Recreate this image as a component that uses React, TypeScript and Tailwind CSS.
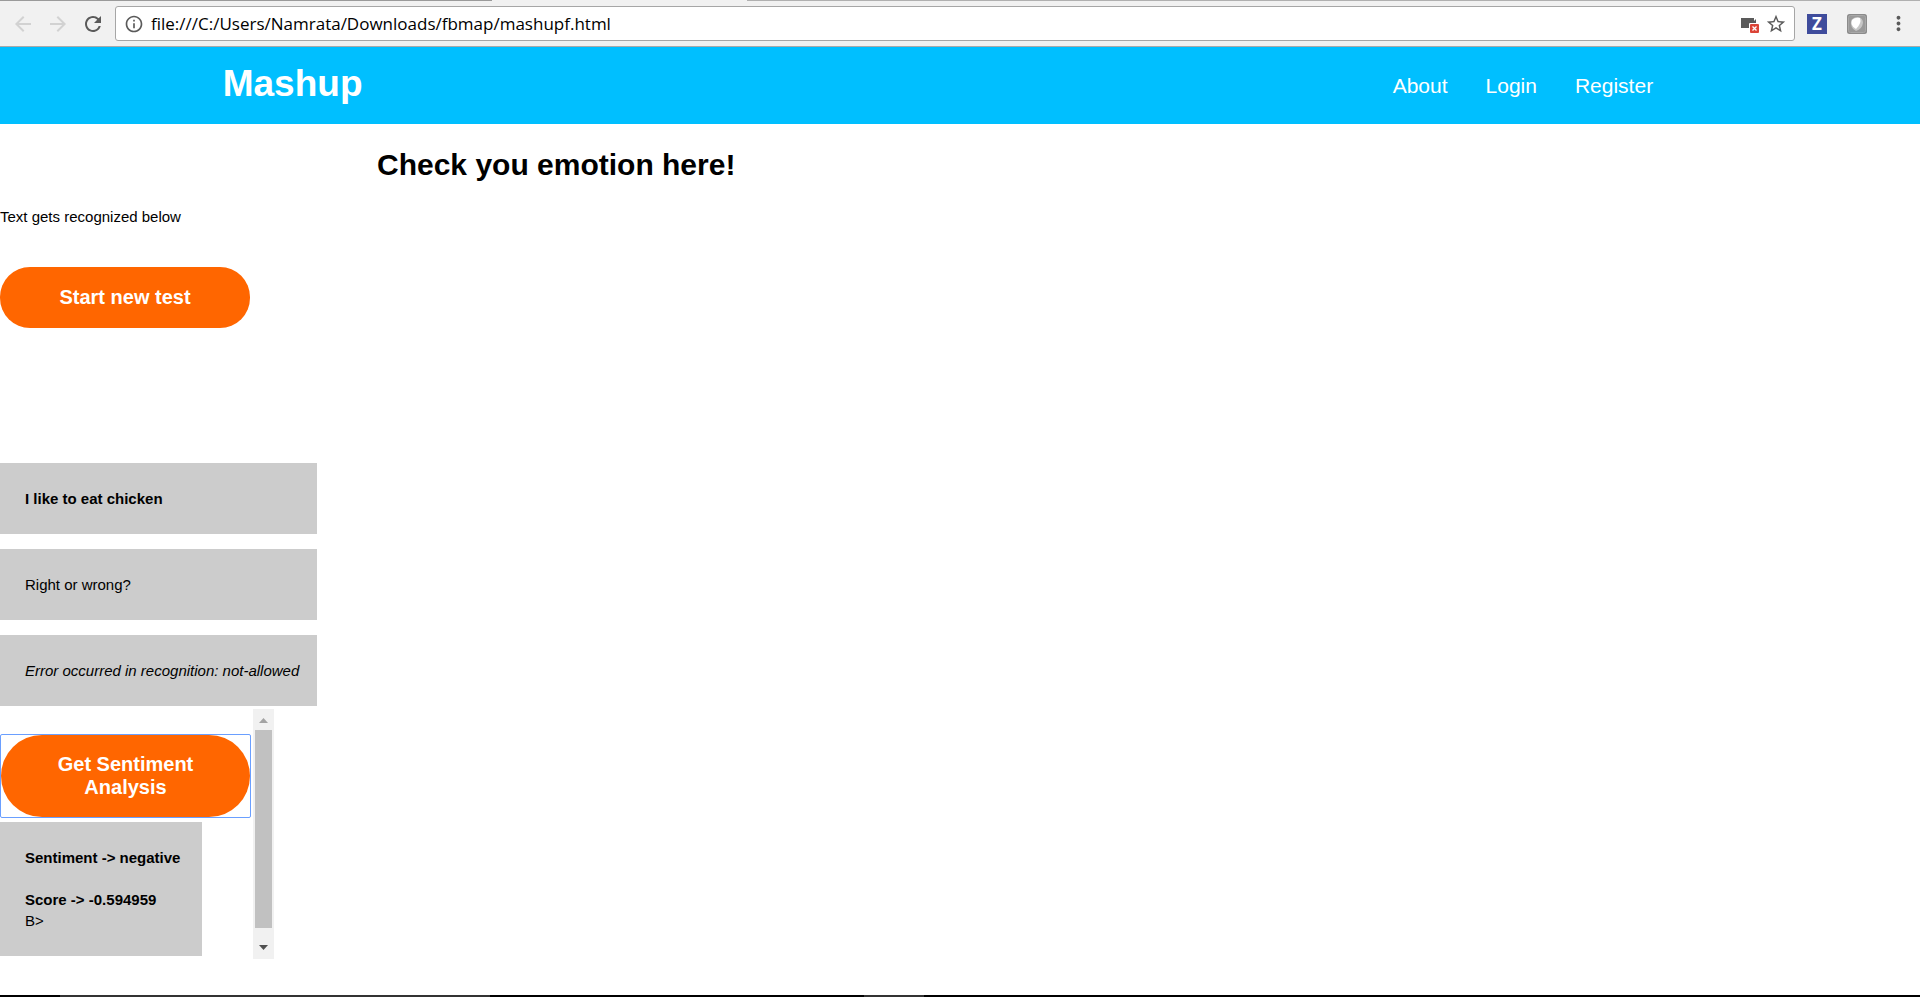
import React from "react";
import { MdArrowBack, MdArrowForward, MdRefresh, MdInfoOutline, MdStarBorder, MdMoreVert } from "react-icons/md";

function BlockedCamera() {
  return (
    <svg width="19" height="18" viewBox="0 0 19 18" aria-hidden="true">
      <path d="M0 3h13v3l2-2v9H0z" fill="#5a5a5a" />
      <rect x="8" y="8" width="11" height="10" rx="1" fill="#fff" />
      <rect x="9" y="9" width="9" height="9" rx="1" fill="#db4437" />
      <path d="M11.500 11.500l4 4m0-4l-4 4" stroke="#fff" strokeWidth="1.300" />
    </svg>
  );
}

function ShieldIcon() {
  return (
    <svg width="20" height="20" viewBox="0 0 20 20" aria-hidden="true">
      <rect width="20" height="20" rx="2.500" fill="#8b8b8b" />
      <rect x="1.500" y="1.500" width="17" height="17" rx="2" fill="#999" stroke="#a8a8a8" />
      <path d="M4 7Q6 3 11 3Q16 4 16 9Q15 15 9 17Q3 14 4 7z" fill="#c6c6c6" />
      <path d="M5 6Q8 3 13 4Q15 9 9 15Q3 12 5 6z" fill="#fff" />
    </svg>
  );
}

function BrowserBar() {
  return (
    <div className="flex h-[47px] flex-col border-b border-[#a9a9a9] bg-[#f1f1f1]">
      <div className="flex h-px">
        <div className="w-[25.6%] bg-[#9a9a9a]" />
        <div className="w-[13.3%]" />
        <div className="flex-1 bg-[#b0b0b0]" />
      </div>
      <div className="flex flex-1 items-center pl-[11px]">
        <button type="button" aria-label="Back" className="text-[#d2d2d2]">
          <MdArrowBack size={24} />
        </button>
        <button type="button" aria-label="Forward" className="ml-[11px] text-[#d2d2d2]">
          <MdArrowForward size={24} />
        </button>
        <button type="button" aria-label="Reload" className="ml-[11px] text-[#5a5a5a]">
          <MdRefresh size={24} />
        </button>
        <div className="ml-[10px] flex h-[35px] flex-1 items-center rounded-[3px] border border-[#a6a6a6] bg-white pr-[7px] pl-2">
          <MdInfoOutline size={20} className="text-[#5a5a5a]" />
          <input
            aria-label="Address"
            defaultValue="file:///C:/Users/Namrata/Downloads/fbmap/mashupf.html"
            className="ml-[7px] min-w-0 flex-1 bg-transparent font-['Open_Sans','Noto_Sans',sans-serif] text-[17px] text-black outline-none"
          />
          <BlockedCamera />
          <button type="button" aria-label="Bookmark" className="ml-[5px] text-[#5a5a5a]">
            <MdStarBorder size={22} />
          </button>
        </div>
        <button
          type="button"
          className="ml-3 h-5 w-5 bg-[#3f4c9c] text-center font-['Open_Sans',sans-serif] text-[17px] leading-5 font-bold text-white"
        >
          Z
        </button>
        <button type="button" aria-label="Extension" className="ml-5">
          <ShieldIcon />
        </button>
        <button type="button" aria-label="Menu" className="mr-[10px] ml-5 text-[#5a5a5a]">
          <MdMoreVert size={23} />
        </button>
      </div>
    </div>
  );
}

function Note({ children }: { children: React.ReactNode }) {
  return <div className="w-[317px] bg-[#ccc] px-[25px] py-[25px] whitespace-nowrap">{children}</div>;
}

function ScrollTrack() {
  return (
    <div className="flex w-[21px] flex-col items-center bg-[#f1f1f1]">
      <div className="flex h-[21px] items-center pt-[2px]">
        <svg width="9" height="5" viewBox="0 0 9 5" aria-hidden="true">
          <path d="M0 5L4.500 0L9 5z" fill="#a3a3a3" />
        </svg>
      </div>
      <div className="h-[198px] w-[17px] bg-[#c1c1c1]" />
      <div className="mt-auto flex h-6 items-center">
        <svg width="9" height="5" viewBox="0 0 9 5" aria-hidden="true">
          <path d="M0 0L4.500 5L9 0z" fill="#505050" />
        </svg>
      </div>
    </div>
  );
}

export default function App() {
  return (
    <div className="flex min-h-screen flex-col bg-white font-['Liberation_Sans',Arial,sans-serif] text-[15px] leading-[21px] text-black">
      <BrowserBar />
      <header className="flex h-[77px] items-center justify-between bg-[#00bfff] pr-[13.9%] pl-[11.6%] text-white">
        <h1 className="pb-[3px] text-[37px] leading-[44px] font-bold">Mashup</h1>
        <nav className="flex gap-[38px] text-[21px] leading-6">
          <a href="#about">About</a>
          <a href="#login">Login</a>
          <a href="#register">Register</a>
        </nav>
      </header>
      <main>
        <h2 className="mt-6 pl-[377px] text-[30px] leading-[34px] font-bold">Check you emotion here!</h2>
        <p className="mt-6">Text gets recognized below</p>
        <button
          type="button"
          className="mt-10 block w-[250px] rounded-[30px] bg-[#ff6600] px-10 py-[19px] text-[20px] leading-[23px] font-bold text-white"
        >
          Start new test
        </button>
        <div className="mt-[135px] flex flex-col gap-[15px]">
          <Note>
            <b>I like to eat chicken</b>
          </Note>
          <Note>Right or wrong?</Note>
          <Note>
            <i>Error occurred in recognition: not-allowed</i>
          </Note>
        </div>
        <section className="mt-[3px] flex h-[250px] w-[274px] justify-between">
          <div className="pt-[25px]">
            <div className="w-[251px] rounded-[2px] border border-[#6a9fff]">
              <button
                type="button"
                className="block w-full rounded-[41px] bg-[#ff6600] px-10 py-[18px] text-[20px] leading-[23px] font-bold text-white"
              >
                Get Sentiment Analysis
              </button>
            </div>
            <div className="mt-1 w-[202px] bg-[#ccc] px-[25px] py-[25px] whitespace-nowrap">
              <b className="block">Sentiment -&gt; negative</b>
              <br />
              <b className="block">Score -&gt; -0.594959</b>
              B&gt;
            </div>
          </div>
          <ScrollTrack />
        </section>
      </main>
      <div className="mt-auto flex h-[2px] bg-black">
        <div className="ml-[3.1%] w-[22.4%] bg-[#333]" />
        <div className="ml-[19.5%] w-[3.1%] bg-[#333]" />
      </div>
    </div>
  );
}
